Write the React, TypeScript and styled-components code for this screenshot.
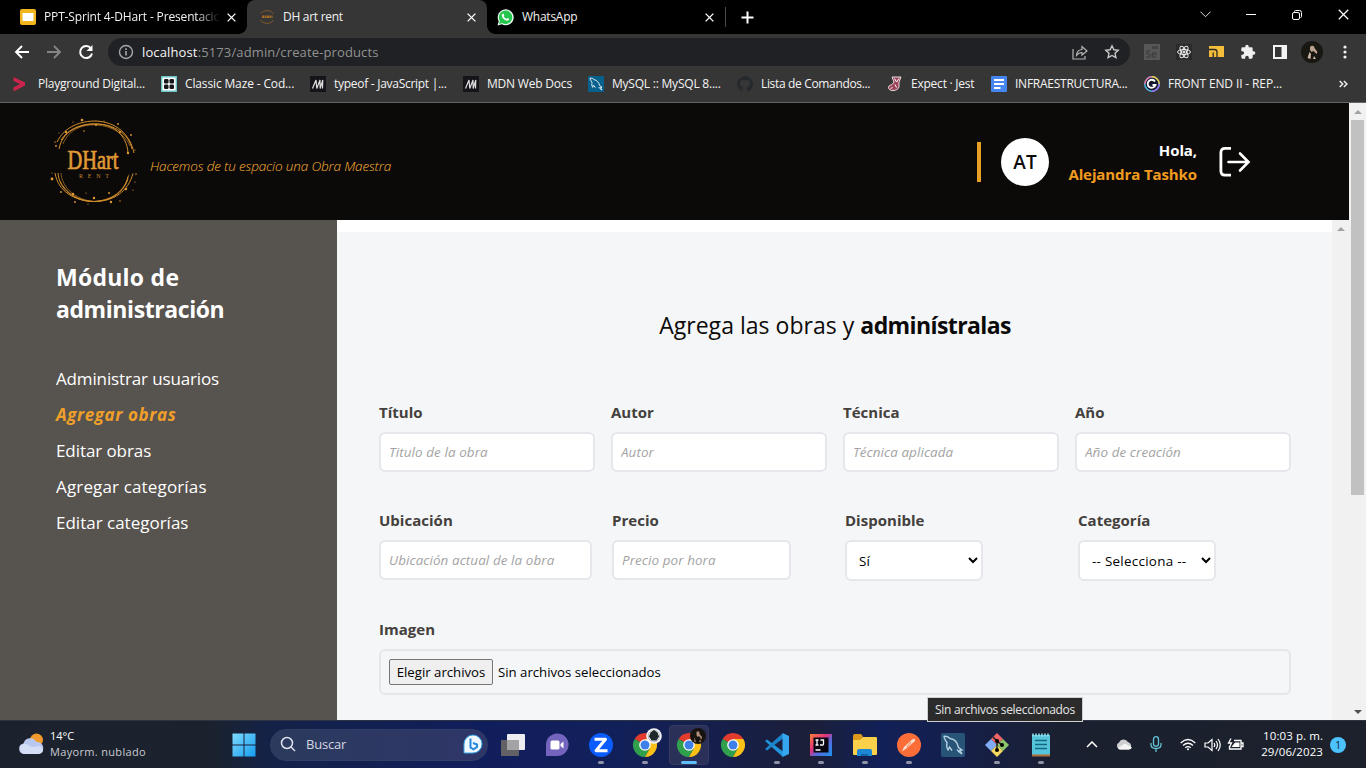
import React from "react";
import styled, { createGlobalStyle, css } from "styled-components";

const Global = createGlobalStyle`
  * { box-sizing: border-box; }
  body { margin: 0; overflow: hidden; background: #000; }
  body, input, select, button { font-family: "Open Sans", "Noto Sans", sans-serif; }
`;

const Screen = styled.div`
  width: 1366px;
  height: 768px;
  display: flex;
  flex-direction: column;
  position: relative;
  overflow: hidden;
`;

/* ---------- Browser chrome ---------- */

const TabStrip = styled.div`
  height: 34px;
  flex: none;
  display: flex;
  background: #000;
  color: #f1f1f1;
`;

const Tab = styled.div<{ $width: number; $active?: boolean; $inset: number }>`
  width: ${(p) => p.$width}px;
  height: 34px;
  display: flex;
  align-items: center;
  gap: 8px;
  padding: 0 11px 0 ${(p) => p.$inset}px;
  position: relative;
  svg {
    flex: none;
  }
  ${(p) =>
    p.$active &&
    css`
      background: #363636;
      border-radius: 8px 8px 0 0;
      &::before,
      &::after {
        content: "";
        position: absolute;
        bottom: 0;
        width: 8px;
        height: 8px;
      }
      &::before {
        left: -8px;
        background: radial-gradient(circle at 0 0, transparent 7.5px, #363636 8px);
      }
      &::after {
        right: -8px;
        background: radial-gradient(circle at 100% 0, transparent 7.5px, #363636 8px);
      }
    `}
`;

const TabTitle = styled.span<{ $fade?: boolean; $track?: number }>`
  flex: 1;
  min-width: 0;
  font-size: 12px;
  line-height: 18px;
  letter-spacing: ${(p) => p.$track ?? 0}px;
  white-space: nowrap;
  ${(p) =>
    p.$fade &&
    css`
      mask-image: linear-gradient(to right, #000 152px, transparent 176px);
    `}
`;

const NewTab = styled.div`
  display: flex;
  align-items: center;
  padding-left: 15px;
  margin: 7px 0;
  height: 20px;
  border-left: 1px solid #4b4b4b;
`;

const WindowButtons = styled.div`
  margin-left: auto;
  display: flex;
  align-items: center;
  height: 29px;
`;

const WindowButton = styled.div`
  width: 46px;
  display: flex;
  justify-content: center;
`;

const Toolbar = styled.div`
  height: 36px;
  flex: none;
  display: flex;
  align-items: center;
  background: #363636;
  padding-left: 11px;
`;

const NavButton = styled.div`
  width: 32px;
  height: 28px;
  display: flex;
  align-items: center;
  padding-left: 3px;
`;

const AddressBar = styled.div`
  width: 1022px;
  height: 28px;
  margin-left: 1px;
  border-radius: 14px;
  background: #202124;
  display: flex;
  align-items: center;
  padding: 0 10px;
  gap: 8px;
`;

const Url = styled.span`
  flex: 1;
  font-size: 13px;
  line-height: 20px;
  color: #919191;
  letter-spacing: 0.13px;
  b {
    font-weight: 400;
    color: #f4f4f4;
  }
`;

const BarIcon = styled.div<{ $width?: number }>`
  width: ${(p) => p.$width ?? 32}px;
  display: flex;
  align-items: center;
  justify-content: center;
`;

const Extensions = styled.div`
  display: flex;
  align-items: center;
  padding-left: 6px;
`;

const BookmarkBar = styled.div`
  height: 33px;
  flex: none;
  display: flex;
  align-items: center;
  padding: 0 0 4px 12px;
  background: #363636;
  border-bottom: 1px solid #666;
  color: #f4f4f4;
`;

const Bookmark = styled.div<{ $width: number; $gap?: number }>`
  width: ${(p) => p.$width}px;
  flex: none;
  display: flex;
  align-items: center;
  gap: ${(p) => p.$gap ?? 8}px;
  white-space: nowrap;
  font-size: 12px;
  line-height: 18px;
  svg {
    flex: none;
  }
`;

const BookmarkLabel = styled.span<{ $track: number }>`
  letter-spacing: ${(p) => p.$track}px;
`;

/* ---------- Web page ---------- */

const Viewport = styled.div`
  height: 617px;
  flex: none;
  display: flex;
`;

const Site = styled.div`
  width: 1349px;
  display: flex;
  flex-direction: column;
`;

const SiteHeader = styled.header`
  height: 117px;
  flex: none;
  background: #0c0a09;
  display: flex;
  align-items: center;
  padding: 0 98px 0 49px;
`;

const Tagline = styled.p`
  margin: 8px 0 0 11px;
  font-size: 13.5px;
  line-height: 20px;
  font-style: italic;
  font-weight: 350;
  letter-spacing: -0.15px;
  color: #fdb03a;
`;

const Account = styled.div`
  margin-left: auto;
  display: flex;
  align-items: center;
`;

const AccountRule = styled.div`
  width: 4px;
  height: 40px;
  background: #e89f25;
`;

const Avatar = styled.div`
  width: 48px;
  height: 48px;
  margin-left: 20px;
  border-radius: 50%;
  background: #fff;
  color: #0c0a09;
  display: flex;
  align-items: center;
  justify-content: center;
  font-size: 19px;
  font-weight: 600;
  letter-spacing: 0;
  padding-top: 1px;
`;

const Greeting = styled.div`
  width: 148px;
  text-align: right;
  font-size: 15px;
  line-height: 24px;
  font-weight: 700;
  color: #fff;
  letter-spacing: -0.1px;
  white-space: nowrap;
  span {
    display: block;
    color: #f29b1f;
  }
`;

const LogoutButton = styled.div`
  margin-left: 21px;
  width: 33px;
  display: flex;
`;

const Body = styled.div`
  flex: 1;
  display: flex;
`;

const Sidebar = styled.aside`
  width: 337px;
  background: #57534e;
  padding: 41px 56px 0;
  color: #fff;
`;

const SidebarTitle = styled.h2`
  margin: 0 0 36px;
  font-size: 23px;
  line-height: 32px;
  font-weight: 700;
  letter-spacing: -0.42px;
`;

const TitleLead = styled.span`
  letter-spacing: 0.25px;
`;

const NavItem = styled.div<{ $active?: boolean; $track: number }>`
  height: 36px;
  font-size: 17px;
  line-height: 36px;
  letter-spacing: ${(p) => p.$track}px;
  ${(p) =>
    p.$active &&
    css`
      color: #f0a02a;
      font-style: italic;
      font-weight: 700;
    `}
`;

const Main = styled.main`
  width: 995px;
  background: #f4f6f8;
  border-top: 12px solid #fff;
  padding: 77px 41px 0 42px;
`;

const Title = styled.h1`
  margin: 0;
  text-align: center;
  font-size: 23px;
  line-height: 32px;
  font-weight: 400;
  color: #0c0a09;
  letter-spacing: 0.03px;
  b {
    font-weight: 700;
    letter-spacing: -0.6px;
  }
`;

const FieldRow = styled.div<{ $gap: number; $top: number }>`
  display: grid;
  grid-template-columns: repeat(4, 1fr);
  column-gap: ${(p) => p.$gap}px;
  margin-top: ${(p) => p.$top}px;
`;

const Field = styled.div`
  display: flex;
  flex-direction: column;
  min-width: 0;
`;

const FileField = styled(Field)`
  margin-top: 36px;
`;

const Label = styled.label`
  font-size: 15px;
  line-height: 24px;
  margin-bottom: 8px;
  font-weight: 700;
  color: #44403c;
  letter-spacing: 0.02px;
`;

const control = css`
  border: 2px solid #e5e7eb;
  border-radius: 6px;
  background: #fff;
  font-weight: 400;
  outline: none;
`;

const TextInput = styled.input<{ $width?: number }>`
  ${control}
  font-size: 13.4px;
  width: ${(p) => (p.$width ? `${p.$width}px` : "100%")};
  height: 40px;
  padding: 0 8px;
  &::placeholder {
    color: #a3a3a3;
    font-style: italic;
    letter-spacing: 0.1px;
    opacity: 1;
  }
`;

const Select = styled.select`
  ${control}
  font-size: 13.4px;
  letter-spacing: 0.28px;
  width: 138px;
  height: 41px;
  padding: 0 0 0 8px;
  color: #000;
`;

const FileBox = styled.div`
  height: 46px;
  border: 2px solid #e5e7eb;
  border-radius: 6px;
  display: flex;
  align-items: center;
  padding: 0 8px;
  gap: 5px;
  font-size: 13.2px;
  color: #000;
`;

const FileButton = styled.button`
  width: 104px;
  height: 26px;
  padding: 0;
  border: 1px solid #767676;
  border-radius: 2px;
  background: #efefef;
  color: #000;
  font-size: 13.2px;
  white-space: nowrap;
`;

const ScrollTrack = styled.div`
  width: 17px;
  flex: none;
  background: #f1f1f1;
  display: flex;
  flex-direction: column;
  align-items: center;
`;

const ScrollThumb = styled.div`
  width: 13px;
  height: 375px;
  background: #c1c1c1;
`;

const ScrollArrow = styled.div<{ $down?: boolean }>`
  height: 17px;
  display: flex;
  align-items: center;
  margin-top: ${(p) => (p.$down ? "auto" : "0")};
`;

const Tooltip = styled.div`
  position: absolute;
  left: 927px;
  top: 697px;
  width: 156px;
  height: 25px;
  background: #2b2b2b;
  border: 1px solid #cfcfcf;
  color: #e6e6e6;
  font-size: 12px;
  line-height: 24px;
  text-align: center;
  letter-spacing: -0.32px;
  white-space: nowrap;
`;

/* ---------- Taskbar ---------- */

const Taskbar = styled.div`
  height: 48px;
  flex: none;
  display: flex;
  align-items: center;
  border-top: 1px solid #2d3444;
  background: linear-gradient(
    to right,
    #1c222d 0,
    #1b222e 210px,
    #142248 270px,
    #111e5c 480px,
    #12205a 620px,
    #171f49 730px,
    #1c1f38 810px,
    #112058 880px,
    #141f4c 950px,
    #1b2030 1060px,
    #1c212b 1366px
  );
  color: #fff;
`;

const Weather = styled.div`
  width: 222px;
  display: flex;
  align-items: center;
  gap: 6px;
  padding: 0 0 2px 18px;
  font-size: 11px;
  line-height: 16px;
  span {
    display: block;
    color: #c8cbd0;
    letter-spacing: 0.33px;
  }
`;

const TaskIcon = styled.div<{ $state?: "open" | "active" }>`
  width: 40px;
  height: 40px;
  margin: 0 2px;
  flex: none;
  display: flex;
  align-items: center;
  justify-content: center;
  position: relative;
  border-radius: 4px;
  ${(p) =>
    p.$state === "active" &&
    css`
      background: #2b3059;
      border: 1px solid #343a60;
    `}
  ${(p) =>
    p.$state &&
    css`
      &::after {
        content: "";
        position: absolute;
        bottom: ${p.$state === "active" ? 0 : 1}px;
        width: ${p.$state === "active" ? 16 : 6}px;
        height: 3px;
        border-radius: 2px;
        background: ${p.$state === "active" ? "#5ebcf8" : "#9093a6"};
      }
    `}
`;

const Search = styled.div`
  width: 218px;
  height: 32px;
  margin: 0 3px 0 4px;
  border-radius: 16px;
  background: linear-gradient(to right, #2b3a5d, #2e3668);
  border: 1px solid #303f66;
  display: flex;
  align-items: center;
  padding: 0 4px 1px 9px;
  gap: 10px;
  font-size: 13px;
  color: #d3d7e2;
  span {
    flex: 1;
    letter-spacing: -0.2px;
  }
`;

const Tray = styled.div`
  margin-left: auto;
  display: flex;
  align-items: center;
  padding-right: 20px;
`;

const TrayIcon = styled.div<{ $width: number; $after?: number }>`
  width: ${(p) => p.$width}px;
  margin-right: ${(p) => p.$after ?? 0}px;
  display: flex;
  justify-content: center;
`;

const Clock = styled.div`
  width: 75px;
  padding-bottom: 2px;
  text-align: right;
  font-size: 11.5px;
  line-height: 16px;
  letter-spacing: 0.08px;
  white-space: nowrap;
`;

const Count = styled.div`
  width: 16px;
  height: 16px;
  margin-left: 7px;
  border-radius: 50%;
  background: #4cc2ff;
  color: #14202e;
  font-size: 10px;
  line-height: 16px;
  text-align: center;
`;

/* ---------- Icons ---------- */

const CloseIcon = ({ size = 9, w = 1.5 }: { size?: number; w?: number }) => (
  <svg width={size} height={size} viewBox="0 0 10 10" stroke="#fff" strokeWidth={w}>
    <path d="M.7.7l8.6 8.6M9.3.7L.7 9.3" />
  </svg>
);

const SlidesIcon = () => (
  <svg width="16" height="16">
    <rect width="16" height="16" rx="2" fill="#f2b51d" />
    <rect x="2.5" y="4" width="11" height="8" fill="#fff" />
  </svg>
);

const ArtIcon = () => (
  <svg width="16" height="16" fill="none" stroke="#80592a">
    <path d="M1.500 5C4 .5 12 .5 14.500 5M1.500 11c2.500 4.500 10.500 4.500 13 0" />
    <path d="M3 7.700h10.500" stroke="#a56c25" strokeWidth="2.600" strokeDasharray="2 .5" />
  </svg>
);

const WhatsAppIcon = () => (
  <svg width="17" height="17" viewBox="0 0 17 17">
    <path d="M.5 16.500l1.200-4.300A8 8 0 1 1 4.800 15.300z" fill="#e9f9ee" />
    <path d="M2 15l.9-3.100A6.700 6.700 0 1 1 5.200 14.100z" fill="#25c64d" />
    <path
      d="M5.600 4.800c.5-.5 1-.3 1.200.2l.5 1.200c0 .5-.6.800-.6 1.100.6 1.200 1.500 2 2.700 2.600.4 0 .7-.9 1.100-.9l1.500.8c.5.900-.6 2-1.700 2-2.500-.1-5.700-3.300-5.600-5.500 0-.6.400-1.100.9-1.500z"
      fill="#fff"
    />
  </svg>
);

const DolphinIcon = ({ size, bg, line = "#fff" }: { size: number; bg: string; line?: string }) => (
  <svg width={size} height={size} viewBox="0 0 24 24" fill="none" stroke={line}>
    <rect width="24" height="24" rx="2" fill={bg} stroke="none" />
    <path
      d="M2.500 3.500c3-.8 5 .2 6.500 2 4 .5 7.500 4 8.500 9l3.500 2.500-2.500.5 2.500 3.500c-2-1-4-2.500-5-4.500M3 4c1 2.500 1.500 4 3 5.500-.5 2.500-.3 5.500 1 7.500l1.500-3 2.500 3.500"
      strokeWidth="1.3"
    />
  </svg>
);

const MdnIcon = () => (
  <svg width="16" height="16" fill="none" stroke="#dcdcdc" strokeWidth="1.200">
    <rect width="16" height="16" fill="#15141a" stroke="none" />
    <path d="M2.500 12.500L6 4l.8 8.500L10 4l.2 8.500M12.800 4l-.3 8.500M10 4l.2 8.500L12.800 4" />
  </svg>
);

const MazeIcon = () => (
  <svg width="16" height="16">
    <rect width="16" height="16" fill="#fff" />
    <path d="M.7.7h14.600v14.600H.7z" fill="none" stroke="#6cc5c5" strokeWidth="1.400" />
    <g fill="#15171a">
      <rect x="3" y="3" width="4.500" height="4.500" rx="1.300" />
      <rect x="8.500" y="3" width="4.500" height="4.500" rx="1.300" />
      <rect x="3" y="8.500" width="4.500" height="4.500" rx="1.300" />
      <rect x="8.500" y="8.500" width="4.500" height="4.500" rx="1.300" />
    </g>
  </svg>
);

const Chrome = ({ badge }: { badge?: "ring" | "photo" }) => (
  <svg width="34" height="34" viewBox="0 0 34 34">
    <path d="M17 17L6.600 11A12 12 0 0 1 27.400 11z" fill="#e33b2e" />
    <path d="M17 17L6.600 11A12 12 0 0 0 17 29L22 20z" fill="#30a04d" />
    <path d="M17 17L22 20 17 29A12 12 0 0 0 27.400 11H17z" fill="#fbc116" />
    <circle cx="17" cy="17" r="5.800" fill="#fff" />
    <circle cx="17" cy="17" r="4.500" fill="#3f7fe8" />
    {badge === "ring" && (
      <>
        <circle cx="26" cy="8" r="7.800" fill="#f4f5f8" />
        <circle cx="26" cy="8" r="5.800" fill="none" stroke="#8d949b" strokeWidth=".6" />
        <path d="M26 2l3.500 2.500 1.500 4-2.500 4h-5l-2.500-4L22.500 4.500z" fill="#1d2729" />
      </>
    )}
    {badge === "photo" && (
      <>
        <circle cx="26" cy="8" r="8" fill="#17130f" />
        <path d="M24.500 4c1.500-1.500 3.500-.5 3 2l2.500 3-.5 2.500-2.500-3.500-1.500 1-1-2z" fill="#b58f7c" />
        <path d="M22.500 9l1.500 5h-2zM28 11l1.500 3h-2.500z" fill="#8d6a58" />
      </>
    )}
  </svg>
);

const Triangle = ({ up, color }: { up?: boolean; color: string }) => (
  <svg width="8" height="4">
    <path d={up ? "M0 4L4 0l4 4z" : "M0 0h8L4 4z"} fill={color} />
  </svg>
);

const specks = [
  [81, 120, 1.3], [65, 132, 1.2], [72, 122, 0.6], [83, 131, 0.8], [95, 125, 1], [103, 121, 0.6],
  [117, 124, 0.9], [119, 132, 1.1], [130, 135, 0.9], [54, 142, 0.7], [55, 146, 0.9], [58, 133, 0.5],
  [127, 153, 1.2], [134, 150, 0.6], [51, 179, 1.4], [51, 173, 0.5], [60, 192, 0.9], [72, 194, 1.2],
  [74, 202, 0.9], [87, 204, 0.6], [93, 198, 1.2], [85, 193, 0.6], [110, 202, 1.2], [119, 201, 0.7],
  [125, 189, 1.2], [108, 193, 0.9], [135, 174, 0.8], [134, 182, 0.6], [132, 190, 0.6],
];

const Logo = () => (
  <svg width="90" height="90" viewBox="48 117 90 90" fill="none" stroke="#d18d2d" strokeWidth="1">
    <path d="M56 142C64 126 80 121 95 121c20 1 34 13 38 32" />
    <path d="M58 149C61 132 77 124 95 124c17 0 31 11 32 29" />
    <path d="M60 140C67 129 81 123 95 124c18 0 33 10 36 25" />
    <path d="M62 144C68 129 82 124 96 125c15 1 28 9 33 21" strokeWidth=".6" />
    <path d="M54 173c3 18 19 28 39 28.500 20 0 34-10 39-28" />
    <path d="M57 173c1 16 17 29 36 28.500 20-1 31-11 34-25" />
    <path d="M60 173c1 15 15 27 33 28.500 17-1 31-10 35-27" strokeWidth=".6" />
    <path d="M59 181c6 12 18 20 34 20.500 17 0 29-9 34-22" strokeWidth=".8" />
    <g fill="#e19a35" stroke="none">
      {specks.map(([x, y, r], i) => (
        <circle key={i} cx={x} cy={y} r={r} />
      ))}
      <text
        x="66.500"
        y="169"
        textLength="51"
        lengthAdjust="spacingAndGlyphs"
        fontFamily="Liberation Serif, serif"
        fontSize="27.500"
        stroke="#e19a35"
        strokeWidth=".7"
        fill="#e19a35"
      >
        DHart
      </text>
      <text x="78" y="178" textLength="30" fontFamily="Liberation Serif, serif" fontSize="6" fill="#c48630">
        RENT
      </text>
    </g>
  </svg>
);

const navItems: [string, number][] = [
  ["Administrar usuarios", -0.14],
  ["Agregar obras", 0.58],
  ["Editar obras", -0.08],
  ["Agregar categorías", 0.15],
  ["Editar categorías", 0],
];

export default function App() {
  return (
    <Screen>
      <Global />
      <TabStrip>
        <Tab $width={247} $inset={20}>
          <SlidesIcon />
          <TabTitle $fade $track={-0.15}>PPT-Sprint 4-DHart - Presentacio</TabTitle>
          <CloseIcon />
        </Tab>
        <Tab $width={240} $inset={12} $active>
          <ArtIcon />
          <TabTitle $track={-0.28}>DH art rent</TabTitle>
          <CloseIcon />
        </Tab>
        <Tab $width={238} $inset={10}>
          <WhatsAppIcon />
          <TabTitle $track={-0.25}>WhatsApp</TabTitle>
          <CloseIcon />
        </Tab>
        <NewTab>
          <svg width="13" height="13" stroke="#fff" strokeWidth="2">
            <path d="M6.500.5v12M.5 6.500h12" />
          </svg>
        </NewTab>
        <WindowButtons>
          <WindowButton>
            <svg width="11" height="7" fill="none" stroke="#ddd">
              <path d="M.5.7l5 5 5-5" />
            </svg>
          </WindowButton>
          <WindowButton>
            <svg width="10" height="2">
              <path d="M0 .5h10" stroke="#fff" />
            </svg>
          </WindowButton>
          <WindowButton>
            <svg width="10" height="10" fill="none" stroke="#fff">
              <rect x=".5" y="2.500" width="7" height="7" rx="1.500" />
              <path d="M2.500 2V1.500q0-1 1-1h4q2 0 2 2v4q0 1-1 1" />
            </svg>
          </WindowButton>
          <WindowButton>
            <CloseIcon size={11} w={1.1} />
          </WindowButton>
        </WindowButtons>
      </TabStrip>

      <Toolbar>
        <NavButton>
          <svg width="16" height="14" fill="none" stroke="#fff" strokeWidth="1.900">
            <path d="M15 7H2M8 1L2 7l6 6" />
          </svg>
        </NavButton>
        <NavButton>
          <svg width="16" height="14" fill="none" stroke="#858585" strokeWidth="1.900">
            <path d="M1 7h13M8 1l6 6-6 6" />
          </svg>
        </NavButton>
        <NavButton>
          <svg width="16" height="16" fill="none" stroke="#fff" strokeWidth="2">
            <path d="M13 4.500A6 6 0 1 0 14 9.500" />
            <path d="M14.500 1v6h-6z" fill="#fff" stroke="none" />
          </svg>
        </NavButton>
        <AddressBar>
          <svg width="16" height="16" fill="none" stroke="#a5a8ab" strokeWidth="1.400">
            <circle cx="8" cy="8" r="6.500" />
            <path d="M8 7v4.500M8 4.300v1.600" strokeWidth="1.600" />
          </svg>
          <Url>
            <b>localhost</b>:5173/admin/create-products
          </Url>
          <BarIcon>
            <svg width="16" height="15" fill="none" stroke="#b4b4b4" strokeWidth="1.200">
              <path d="M1 4v10h12v-3" />
              <path d="M4.500 10.500c0-4 2-5.500 5.500-6V1.500L15 6l-5 4V7.500c-2.500 0-4 1-5.500 3z" />
            </svg>
          </BarIcon>
          <svg width="16" height="16" fill="none" stroke="#c9c9c9" strokeWidth="1.400">
            <path d="M8 1.800l1.900 4 4.300.5-3.200 3 .9 4.300L8 11.500l-3.900 2.100.9-4.300-3.200-3 4.300-.5z" />
          </svg>
        </AddressBar>
        <Extensions>
          <BarIcon>
            <svg width="16" height="16">
              <rect width="16" height="16" fill="#575757" />
              <rect x="8" y="2" width="6" height="3" fill="#444" />
              <text x="1.500" y="13.500" fontSize="10" fontWeight="700" fill="#404040">
                Se
              </text>
            </svg>
          </BarIcon>
          <BarIcon>
            <svg width="16" height="16" fill="none" stroke="#eee">
              <rect width="16" height="16" fill="#292929" stroke="none" />
              <ellipse cx="8" cy="8" rx="6.500" ry="2.500" />
              <ellipse cx="8" cy="8" rx="6.500" ry="2.500" transform="rotate(60 8 8)" />
              <ellipse cx="8" cy="8" rx="6.500" ry="2.500" transform="rotate(120 8 8)" />
              <circle cx="8" cy="8" r="1" fill="#fff" />
            </svg>
          </BarIcon>
          <BarIcon>
            <svg width="15" height="12">
              <path d="M0 0h15v11H0z" fill="#f4bd3a" />
              <path d="M0 3.500h5.500q2.500 0 2.500 2.500v5M4.200 11V6.500" stroke="#2f2c25" strokeWidth="1.300" fill="none" />
            </svg>
          </BarIcon>
          <BarIcon>
            <svg width="16" height="16" viewBox="0 0 24 24" fill="#f1f1f1">
              <path d="M20.500 11H19V7a2 2 0 0 0-2-2h-4V3.500a2.500 2.500 0 0 0-5 0V5H4a2 2 0 0 0-2 2v3.800h1.500a2.700 2.700 0 0 1 0 5.400H2V20a2 2 0 0 0 2 2h3.800v-1.500a2.700 2.700 0 0 1 5.400 0V22H17a2 2 0 0 0 2-2v-4h1.500a2.500 2.500 0 0 0 0-5z" />
            </svg>
          </BarIcon>
          <BarIcon>
            <svg width="14" height="14">
              <rect width="14" height="14" fill="#f4f4f4" />
              <rect x="2" y="2" width="6.500" height="10" fill="#363636" />
            </svg>
          </BarIcon>
          <BarIcon>
            <svg width="22" height="22">
              <circle cx="11" cy="11" r="11" fill="#191712" />
              <path d="M9 6c1.500-2 4.500-1.500 4.500 1l3 4-1 2-3-3-2 1-1.500-2z" fill="#b9a18e" />
              <path d="M6.500 17l2-6 1.500 2-.5 5zM13 15l2 3h-3z" fill="#cbb7a3" />
            </svg>
          </BarIcon>
          <BarIcon $width={33}>
            <svg width="4" height="14" fill="#f1f1f1">
              <circle cx="2" cy="2" r="1.600" />
              <circle cx="2" cy="7" r="1.600" />
              <circle cx="2" cy="12" r="1.600" />
            </svg>
          </BarIcon>
        </Extensions>
      </Toolbar>

      <BookmarkBar>
        <Bookmark $width={149} $gap={10}>
          <svg width="16" height="16">
            <path d="M1.500 1l11.500 5.500v3L1.500 15.500v-4L8 8 1.500 5z" fill="#c9254c" />
          </svg>
          <BookmarkLabel $track={-0.22}>Playground Digital...</BookmarkLabel>
        </Bookmark>
        <Bookmark $width={149}>
          <MazeIcon />
          <BookmarkLabel $track={-0.14}>Classic Maze - Cod...</BookmarkLabel>
        </Bookmark>
        <Bookmark $width={153}>
          <MdnIcon />
          <BookmarkLabel $track={-0.28}>typeof - JavaScript |...</BookmarkLabel>
        </Bookmark>
        <Bookmark $width={125}>
          <MdnIcon />
          <BookmarkLabel $track={-0.2}>MDN Web Docs</BookmarkLabel>
        </Bookmark>
        <Bookmark $width={149}>
          <DolphinIcon size={16} bg="#08618c" />
          <BookmarkLabel $track={-0.22}>MySQL :: MySQL 8....</BookmarkLabel>
        </Bookmark>
        <Bookmark $width={150}>
          <svg width="16" height="16" viewBox="0 0 16 16" fill="#25282c">
            <path d="M8 .3a7.800 7.800 0 0 0-2.500 15.200c.4.100.5-.2.500-.4v-1.400c-2.200.5-2.700-1-2.700-1-.4-.9-.9-1.100-.9-1.100-.7-.5.1-.5.1-.5.800 0 1.200.8 1.200.8.700 1.200 1.800.9 2.300.7 0-.5.2-.9.500-1.100-1.700-.2-3.600-.9-3.600-3.900 0-.8.300-1.500.8-2.100-.1-.2-.4-1 .1-2.100 0 0 .7-.2 2.200.8a7 7 0 0 1 4 0c1.500-1 2.200-.8 2.200-.8.400 1.100.1 1.900.1 2.100.5.600.8 1.300.8 2.100 0 3-1.900 3.700-3.600 3.900.3.200.5.700.5 1.400v2.200c0 .2.100.5.5.4A7.800 7.800 0 0 0 8 .3z" />
          </svg>
          <BookmarkLabel $track={-0.34}>Lista de Comandos...</BookmarkLabel>
        </Bookmark>
        <Bookmark $width={104}>
          <svg width="16" height="16">
            <path d="M5 1h9l-2 5v4c0 3-3 4.500-6 4.500S1 13 1.500 11 4 9.500 5.500 8L7 6z" fill="#9c4459" stroke="#eadce0" strokeWidth="1" />
            <path d="M7.500 2.500L9.500 6l2.500-3.500M3.500 12.500l2-1M8 8.500l1.500 3" stroke="#fff" fill="none" />
          </svg>
          <BookmarkLabel $track={-0.23}>Expect · Jest</BookmarkLabel>
        </Bookmark>
        <Bookmark $width={153}>
          <svg width="16" height="16">
            <rect width="16" height="16" rx="1" fill="#4586f3" />
            <path d="M3 4h10M3 8h10M3 12h6.500" stroke="#fff" strokeWidth="1.800" />
          </svg>
          <BookmarkLabel $track={-0.25}>INFRAESTRUCTURA...</BookmarkLabel>
        </Bookmark>
        <Bookmark $width={195}>
          <svg width="16" height="16" fill="none" strokeWidth="1.500">
            <circle cx="8" cy="8" r="7.200" fill="#15172f" stroke="#4db9e8" />
            <path d="M1 8a7.200 7.200 0 0 1 7-7.200" stroke="#ec719f" />
            <path d="M8 .8A7.200 7.200 0 0 1 15.200 8" stroke="#f4c542" />
            <path d="M15.200 8A7.200 7.200 0 0 1 8 15.200" stroke="#9a6cf0" />
            <path d="M11 5.500a4 4 0 1 0 .5 3.500H8.500" stroke="#fff" strokeWidth="1.800" />
          </svg>
          <BookmarkLabel $track={-0.13}>FRONT END II - REP...</BookmarkLabel>
        </Bookmark>
        <svg width="9" height="8" fill="none" stroke="#eee" strokeWidth="1.500">
          <path d="M.7 1l3 3-3 3M4.900 1l3 3-3 3" />
        </svg>
      </BookmarkBar>

      <Viewport>
        <Site>
          <SiteHeader>
            <Logo />
            <Tagline>Hacemos de tu espacio una Obra Maestra</Tagline>
            <Account>
              <AccountRule />
              <Avatar>AT</Avatar>
              <Greeting>
                Hola,
                <span>Alejandra Tashko</span>
              </Greeting>
              <LogoutButton>
                <svg width="33" height="32" fill="none" stroke="#fff" strokeWidth="2.800">
                  <path d="M13 2.400H7Q2.900 2.400 2.900 6.500v18.500q0 4.100 4.100 4.100h6" />
                  <path d="M10.500 16H30M22 7.500l8.500 8.500-8.500 8.500" strokeLinecap="round" strokeWidth="2.600" />
                </svg>
              </LogoutButton>
            </Account>
          </SiteHeader>
          <Body>
            <Sidebar>
              <SidebarTitle>
                <TitleLead>Módulo de</TitleLead>
                <br />
                administración
              </SidebarTitle>
              {navItems.map(([text, track], i) => (
                <NavItem key={text} $track={track} $active={i === 1}>
                  {text}
                </NavItem>
              ))}
            </Sidebar>
            <Main>
              <Title>
                Agrega las obras y <b>adminístralas</b>
              </Title>
              <FieldRow $gap={16} $top={59}>
                <Field>
                  <Label>Título</Label>
                  <TextInput placeholder="Titulo de la obra" />
                </Field>
                <Field>
                  <Label>Autor</Label>
                  <TextInput placeholder="Autor" />
                </Field>
                <Field>
                  <Label>Técnica</Label>
                  <TextInput placeholder="Técnica aplicada" />
                </Field>
                <Field>
                  <Label>Año</Label>
                  <TextInput placeholder="Año de creación" />
                </Field>
              </FieldRow>
              <FieldRow $gap={20} $top={36}>
                <Field>
                  <Label>Ubicación</Label>
                  <TextInput $width={213} placeholder="Ubicación actual de la obra" />
                </Field>
                <Field>
                  <Label>Precio</Label>
                  <TextInput $width={179} placeholder="Precio por hora" />
                </Field>
                <Field>
                  <Label>Disponible</Label>
                  <Select>
                    <option>Sí</option>
                  </Select>
                </Field>
                <Field>
                  <Label>Categoría</Label>
                  <Select>
                    <option>-- Selecciona --</option>
                  </Select>
                </Field>
              </FieldRow>
              <FileField>
                <Label>Imagen</Label>
                <FileBox>
                  <FileButton>Elegir archivos</FileButton>
                  Sin archivos seleccionados
                </FileBox>
              </FileField>
            </Main>
            <ScrollTrack>
              <ScrollArrow>
                <Triangle up color="#a3a3a3" />
              </ScrollArrow>
            </ScrollTrack>
          </Body>
        </Site>
        <ScrollTrack>
          <ScrollArrow>
            <Triangle up color="#a3a3a3" />
          </ScrollArrow>
          <ScrollThumb />
          <ScrollArrow $down>
            <Triangle color="#505050" />
          </ScrollArrow>
        </ScrollTrack>
      </Viewport>

      <Taskbar>
        <Weather>
          <svg width="26" height="22">
            <circle cx="18.500" cy="7" r="6.500" fill="#f29a2c" />
            <path d="M6 21a5.300 5.300 0 0 1-.5-10.500A7 7 0 0 1 18.500 9 6 6 0 0 1 20 21z" fill="#b9c8ef" />
            <path d="M6 21a5.300 5.300 0 0 1-1-10c5-1 6 3 10 3s6-2 9 1-1 6-4 6z" fill="#d5def7" />
          </svg>
          <div>
            14°C
            <span>Mayorm. nublado</span>
          </div>
        </Weather>
        <TaskIcon>
          <svg width="24" height="24">
            <defs>
              <linearGradient id="win" x2="1" y2="1">
                <stop stopColor="#7fdcfd" />
                <stop offset="1" stopColor="#159bf0" />
              </linearGradient>
            </defs>
            <path d="M.5.5h11v11H.5zM12.500.5h11v11h-11zM.5 12.500h11v11H.5zM12.500 12.500h11v11h-11z" fill="url(#win)" />
          </svg>
        </TaskIcon>
        <Search>
          <svg width="16" height="16" fill="none" stroke="#dfe3ec" strokeWidth="1.500">
            <circle cx="7" cy="7" r="5.500" />
            <path d="M11 11l4 4" />
          </svg>
          <span>Buscar</span>
          <svg width="20" height="20">
            <path d="M1 19V10a9 9 0 1 1 9 9z" fill="#eff8fe" stroke="#37a4e8" />
            <path d="M7.500 4.500v9l3 1.800 3.500-2.300v-2.500l-4-1.500" stroke="#2587df" strokeWidth="2" fill="none" />
          </svg>
        </Search>
        <TaskIcon>
          <svg width="24" height="22">
            <rect x="6" width="18" height="16" rx="1" fill="#ededf1" />
            <rect y="6" width="18" height="16" rx="1" fill="#626266" />
            <path d="M6 6h12v10H6z" fill="#a3a3a6" />
          </svg>
        </TaskIcon>
        <TaskIcon>
          <svg width="24" height="24">
            <path d="M1 23V12A11.300 11.300 0 1 1 12 23z" fill="#7464bd" />
            <rect x="5.500" y="7.500" width="9" height="9" rx="1.500" fill="#fff" />
            <path d="M15.500 11l3-2.500v7l-3-2.500z" fill="#fff" />
          </svg>
        </TaskIcon>
        <TaskIcon $state="open">
          <svg width="24" height="24">
            <circle cx="12" cy="12" r="12" fill="#0b5cff" />
            <path d="M5.500 6.300h11L7 17.700h11.500" fill="none" stroke="#fff" strokeWidth="3" strokeLinejoin="round" />
          </svg>
        </TaskIcon>
        <TaskIcon $state="open">
          <Chrome badge="ring" />
        </TaskIcon>
        <TaskIcon $state="active">
          <Chrome badge="photo" />
        </TaskIcon>
        <TaskIcon>
          <Chrome />
        </TaskIcon>
        <TaskIcon $state="open">
          <svg width="24" height="24">
            <path d="M0 8l2-1.600L18 18.500V24z" fill="#2196dc" />
            <path d="M0 16l2 1.600L18 5.500V0z" fill="#1b83ca" />
            <path d="M17.500 0L24 3v18l-6.500 3z" fill="#36a6ee" />
          </svg>
        </TaskIcon>
        <TaskIcon $state="open">
          <svg width="22" height="22">
            <defs>
              <linearGradient id="ij" x2="1" y2="1">
                <stop stopColor="#f98134" />
                <stop offset=".4" stopColor="#e2317f" />
                <stop offset=".6" stopColor="#5969d9" />
                <stop offset="1" stopColor="#1795ee" />
              </linearGradient>
            </defs>
            <rect width="22" height="22" fill="url(#ij)" />
            <rect x="3.500" y="3.500" width="15" height="15" fill="#090511" />
            <path d="M5.500 6h3M7 6v5M5.500 11h3M10.500 6h3v4q0 1.200-1.800 1H10M5.500 16h5" stroke="#fff" strokeWidth="1.300" fill="none" />
          </svg>
        </TaskIcon>
        <TaskIcon $state="open">
          <svg width="24" height="22">
            <path d="M0 2q0-2 2-2h6l2 2.500L8 6H0z" fill="#dc9a1c" />
            <path d="M0 6h7l3-3h13q1 0 1 1v16q0 1-1 1H1q-1 0-1-1z" fill="#fbd14b" />
            <path d="M4 22v-5q0-2 2-2h11q2 0 2 2v5z" fill="#1c87d2" />
            <path d="M8 20h7v2H8z" fill="#1264a5" />
          </svg>
        </TaskIcon>
        <TaskIcon $state="open">
          <svg width="24" height="24">
            <circle cx="12" cy="12" r="12" fill="#fc6d38" />
            <path d="M17 5.500q2 1 1 2.500l-8 7-5 3.500L7 14l7.500-7z" fill="#f9dfd1" />
            <path d="M10 14l4-5" stroke="#fc6d38" />
          </svg>
        </TaskIcon>
        <TaskIcon>
          <DolphinIcon size={24} bg="#285577" line="#b9d5e5" />
        </TaskIcon>
        <TaskIcon $state="open">
          <svg width="24" height="24">
            <path d="M12 0l6 6-6 6-6-6z" fill="#ef6465" />
            <path d="M6 6l6 6-6 6-6-6z" fill="#81abf4" />
            <path d="M18 6l6 6-6 6-6-6z" fill="#8ac56b" />
            <path d="M12 12l6 6-6 6-6-6z" fill="#f5d85f" />
            <path d="M8 4l4 4v9M12 8l5 4" fill="none" stroke="#222" strokeWidth="1.500" />
            <circle cx="12" cy="8" r="2" />
            <circle cx="12" cy="17" r="2" />
            <circle cx="17" cy="12" r="2" />
          </svg>
        </TaskIcon>
        <TaskIcon $state="open">
          <svg width="20" height="24">
            <rect x="1" y="2" width="18" height="20" fill="#55c5dc" />
            <path d="M1 22.500h18" stroke="#b46c31" strokeWidth="2" />
            <path d="M2 .5v3M5 .5v3M8 .5v3M11 .5v3M14 .5v3M17 .5v3" stroke="#98e4f0" strokeWidth="1.500" />
            <path d="M4 7.500h12M4 11.500h12M4 15.500h12" stroke="#17677f" strokeWidth="1.700" />
          </svg>
        </TaskIcon>
        <Tray>
          <TrayIcon $width={32}>
            <svg width="12" height="7" fill="none" stroke="#fff" strokeWidth="1.500">
              <path d="M1 6l5-5 5 5" />
            </svg>
          </TrayIcon>
          <TrayIcon $width={32}>
            <svg width="17" height="11">
              <path d="M4 10.500A3.700 3.700 0 0 1 3 3.500 5 5 0 0 1 12 3a4 4 0 0 1 1 7.500z" fill="#cfcfd0" />
              <path d="M2 9l7-4.500 7 4q-1 2-3 2H4q-1.500 0-2-1.500z" fill="#f5f5f5" />
            </svg>
          </TrayIcon>
          <TrayIcon $width={32} $after={2}>
            <svg width="12" height="17" fill="none" stroke="#65c3d5" strokeWidth="1.300">
              <rect x="3.500" y=".7" width="5" height="9.500" rx="2.500" />
              <path d="M1 7v1.500q0 4 5 4t5-4V7M6 12.500V16" />
            </svg>
          </TrayIcon>
          <TrayIcon $width={27}>
            <svg width="16" height="13" fill="none" stroke="#fff" strokeWidth="1.300">
              <path d="M.7 5q7.300-7 14.600 0M3 7.500q5-4.500 10 0M5.300 9.800q2.700-2.300 5.400 0" />
              <circle cx="8" cy="11.300" r="1" fill="#fff" stroke="none" />
            </svg>
          </TrayIcon>
          <TrayIcon $width={22}>
            <svg width="17" height="14" fill="none" stroke="#fff" strokeWidth="1.200">
              <path d="M1 5h3l4-3.500v11L4 9H1z" />
              <path d="M10 5q1.500 2 0 4M12 3q3 4 0 8M14 1q4.500 6 0 12" />
            </svg>
          </TrayIcon>
          <TrayIcon $width={24} $after={1}>
            <svg width="17" height="13" fill="none" stroke="#fff" strokeWidth="1.300">
              <path d="M7 2.500h7v8.500H2.500V8M14.500 5h1.500v3.500h-1.500" />
              <path d="M8 4.500h4.500v4.500H4.500z" fill="#fff" stroke="none" />
              <path d="M4 .5L1.500 5h3L2.500 9" />
            </svg>
          </TrayIcon>
          <Clock>
            10:03 p. m.
            <br />
            29/06/2023
          </Clock>
          <Count>1</Count>
        </Tray>
      </Taskbar>
      <Tooltip>Sin archivos seleccionados</Tooltip>
    </Screen>
  );
}
